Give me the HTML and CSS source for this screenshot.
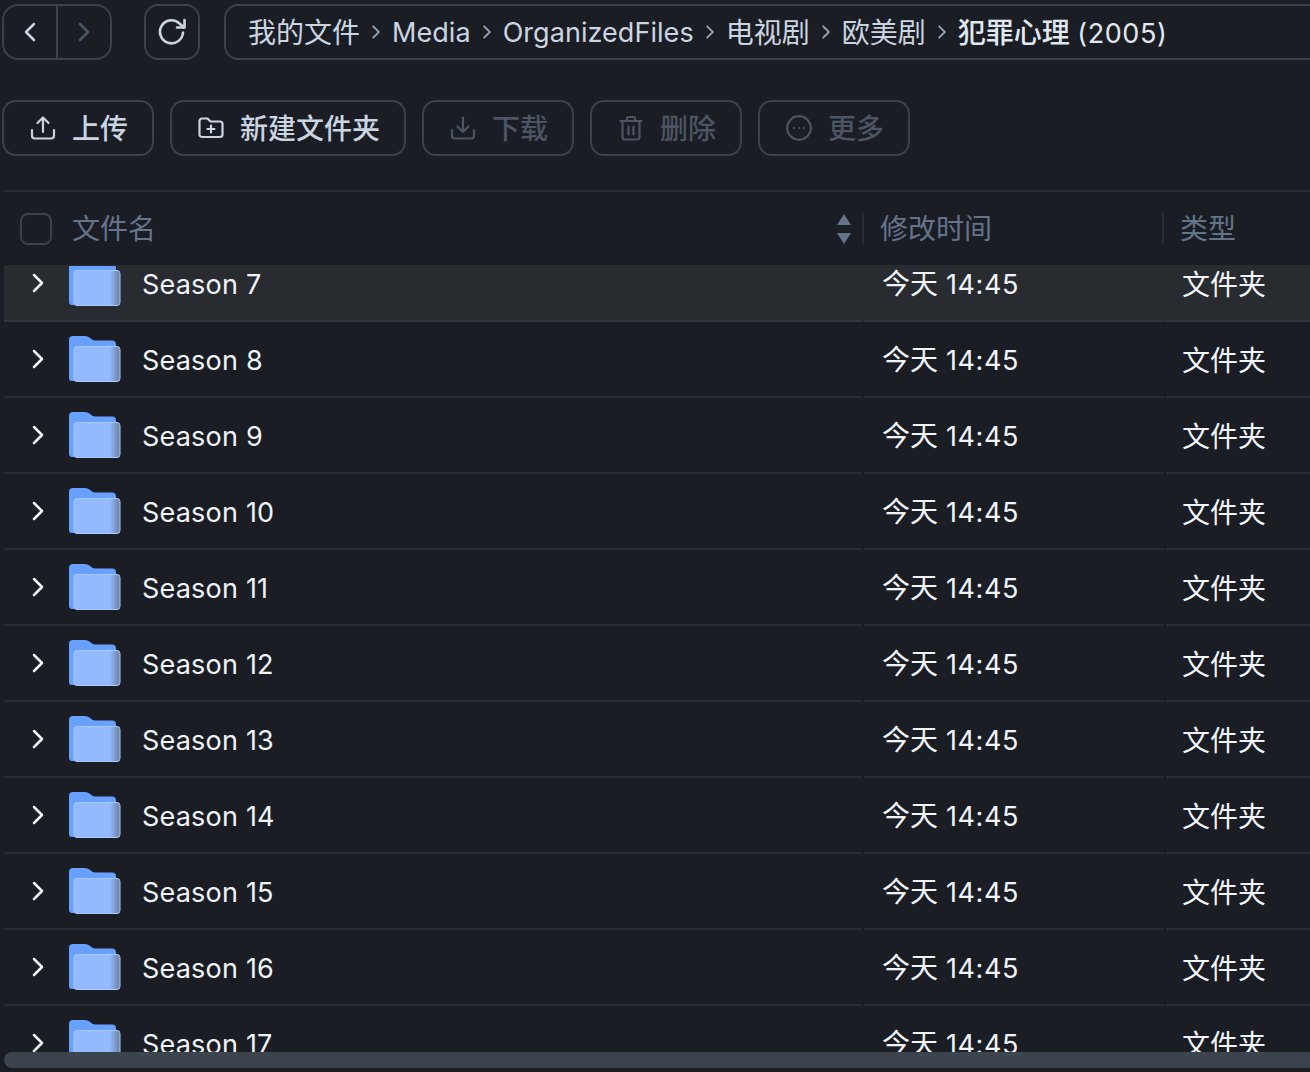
FILE: index.html
```html
<!DOCTYPE html>
<html lang="zh-CN">
<head>
    <meta charset="UTF-8">
    <title>我的文件</title>
    <link rel="stylesheet" href="styles.css">
</head>
<body>
    <svg class="defs" width="0" height="0">
        <defs>
            <linearGradient id="folderFront" x1="0" y1="0" x2="1" y2="0">
                <stop offset="0" stop-color="#93baff"/>
                <stop offset="0.78" stop-color="#93baff"/>
                <stop offset="1" stop-color="#6b7f9f"/>
            </linearGradient>
            <symbol id="folder" viewBox="0 0 52 46">
                <path d="M0 4a4 4 0 0 1 4-4h12q2.500 0 4.500 1.500l2.500 2q1.500 1 3.500 1H43a4 4 0 0 1 4 4V45H3a3 3 0 0 1-3-3z" fill="#68a1fd"/>
                <rect x="5" y="10.500" width="46" height="35" rx="3" fill="url(#folderFront)" stroke="#a9c8ff" stroke-width="1"/>
            </symbol>
            <symbol id="chevron" viewBox="0 0 14 22">
                <path d="M3 3l8 8-8 8" fill="none" stroke="currentColor" stroke-width="2.500" stroke-linecap="round" stroke-linejoin="round"/>
            </symbol>
        </defs>
    </svg>

    <!-- TOP BAR -->
    <div class="topbar">
        <div class="nav-group">
            <button class="nav-btn">
                <svg width="14" height="22"><use href="#chevron" transform="matrix(-1 0 0 1 14 0)"/></svg>
            </button>
            <button class="nav-btn nav-btn-off">
                <svg width="14" height="22"><use href="#chevron"/></svg>
            </button>
        </div>
        <button class="reload-btn">
            <svg width="30" height="30" viewBox="0 0 30 30" fill="none" stroke="currentColor" stroke-width="2.600" stroke-linecap="round" stroke-linejoin="round">
                <path d="M26 15.500A11.500 11.500 0 1 1 22.500 6.500L27 10.500"/>
                <path d="M27.500 3v7.500H20"/>
            </svg>
        </button>
        <div class="crumbs">
            <span>我的文件</span>
            <svg class="crumb-sep" width="10" height="16"><use href="#chevron"/></svg>
            <span class="latin">Media</span>
            <svg class="crumb-sep" width="10" height="16"><use href="#chevron"/></svg>
            <span class="latin">OrganizedFiles</span>
            <svg class="crumb-sep" width="10" height="16"><use href="#chevron"/></svg>
            <span>电视剧</span>
            <svg class="crumb-sep" width="10" height="16"><use href="#chevron"/></svg>
            <span>欧美剧</span>
            <svg class="crumb-sep" width="10" height="16"><use href="#chevron"/></svg>
            <span class="crumb-last">犯罪心理 <span class="latin">(2005)</span></span>
        </div>
    </div>

    <!-- TOOLBAR -->
    <div class="toolbar">
        <button class="tool-btn">
            <svg width="26" height="26" viewBox="0 0 26 26" fill="none" stroke="currentColor" stroke-width="2.200" stroke-linecap="round" stroke-linejoin="round">
                <path d="M2 15v5.500a3 3 0 0 0 3 3h16a3 3 0 0 0 3-3V15"/>
                <path d="M13 17V2.500M7.500 8L13 2.500 18.500 8"/>
            </svg>
            上传
        </button>
        <button class="tool-btn tool-btn-wide">
            <svg width="26" height="26" viewBox="0 0 26 26" fill="none" stroke="currentColor" stroke-width="2.200" stroke-linecap="round" stroke-linejoin="round">
                <path d="M1.500 6a2.500 2.500 0 0 1 2.500-2.500h5.500l3 3H22a2.500 2.500 0 0 1 2.500 2.500v10.500a2.500 2.500 0 0 1-2.500 2.500H4a2.500 2.500 0 0 1-2.500-2.500z"/>
                <path d="M13 10.500v7M9.500 14h7"/>
            </svg>
            新建文件夹
        </button>
        <button class="tool-btn tool-btn-off">
            <svg width="26" height="26" viewBox="0 0 26 26" fill="none" stroke="currentColor" stroke-width="2.200" stroke-linecap="round" stroke-linejoin="round">
                <path d="M2 15v5.500a3 3 0 0 0 3 3h16a3 3 0 0 0 3-3V15"/>
                <path d="M13 2.500V17M7.500 11.500L13 17l5.500-5.500"/>
            </svg>
            下载
        </button>
        <button class="tool-btn tool-btn-off">
            <svg width="26" height="26" viewBox="0 0 26 26" fill="none" stroke="currentColor" stroke-width="2.200" stroke-linecap="round" stroke-linejoin="round">
                <path d="M2.500 6h21M9 6V3.500a1.500 1.500 0 0 1 1.500-1.500h5A1.500 1.500 0 0 1 17 3.500V6"/>
                <path d="M4.500 6v16a2.500 2.500 0 0 0 2.500 2.500h12a2.500 2.500 0 0 0 2.500-2.500V6"/>
                <path d="M10.500 11.500v8M15.500 11.500v8"/>
            </svg>
            删除
        </button>
        <button class="tool-btn tool-btn-off">
            <svg width="26" height="26" viewBox="0 0 26 26" fill="none" stroke="currentColor" stroke-width="2.200" stroke-linecap="round">
                <circle cx="13" cy="13" r="11.800"/>
                <path d="M8 13h.2M13 13h.2M18 13h.2" stroke-width="1.800"/>
            </svg>
            更多
        </button>
    </div>

    <!-- FILE TABLE -->
    <div class="table">
        <div class="table-head">
            <div class="head-name">
                <span class="checkbox"></span>
                <span class="head-label">文件名</span>
                <svg class="sort-icon" width="16" height="32" viewBox="0 0 16 32" fill="#64748b">
                    <path d="M8 1l7 11H1zM8 31L1 20h14z"/>
                </svg>
            </div>
            <div class="head-time"><span class="head-label">修改时间</span></div>
            <div class="head-type"><span class="head-label">类型</span></div>
        </div>

        <div class="table-body">
            <div class="rows">
                <div class="row row-hover">
                    <div class="cell-name"><svg class="row-arrow" width="14" height="22"><use href="#chevron"/></svg><svg class="folder" width="52" height="46"><use href="#folder"/></svg><span class="latin row-title">Season 7</span></div>
                    <div class="cell-time"><span>今天 <span class="latin">14:45</span></span></div>
                    <div class="cell-type">文件夹</div>
                </div>
                <div class="row">
                    <div class="cell-name"><svg class="row-arrow" width="14" height="22"><use href="#chevron"/></svg><svg class="folder" width="52" height="46"><use href="#folder"/></svg><span class="latin row-title">Season 8</span></div>
                    <div class="cell-time"><span>今天 <span class="latin">14:45</span></span></div>
                    <div class="cell-type">文件夹</div>
                </div>
                <div class="row">
                    <div class="cell-name"><svg class="row-arrow" width="14" height="22"><use href="#chevron"/></svg><svg class="folder" width="52" height="46"><use href="#folder"/></svg><span class="latin row-title">Season 9</span></div>
                    <div class="cell-time"><span>今天 <span class="latin">14:45</span></span></div>
                    <div class="cell-type">文件夹</div>
                </div>
                <div class="row">
                    <div class="cell-name"><svg class="row-arrow" width="14" height="22"><use href="#chevron"/></svg><svg class="folder" width="52" height="46"><use href="#folder"/></svg><span class="latin row-title">Season 10</span></div>
                    <div class="cell-time"><span>今天 <span class="latin">14:45</span></span></div>
                    <div class="cell-type">文件夹</div>
                </div>
                <div class="row">
                    <div class="cell-name"><svg class="row-arrow" width="14" height="22"><use href="#chevron"/></svg><svg class="folder" width="52" height="46"><use href="#folder"/></svg><span class="latin row-title">Season 11</span></div>
                    <div class="cell-time"><span>今天 <span class="latin">14:45</span></span></div>
                    <div class="cell-type">文件夹</div>
                </div>
                <div class="row">
                    <div class="cell-name"><svg class="row-arrow" width="14" height="22"><use href="#chevron"/></svg><svg class="folder" width="52" height="46"><use href="#folder"/></svg><span class="latin row-title">Season 12</span></div>
                    <div class="cell-time"><span>今天 <span class="latin">14:45</span></span></div>
                    <div class="cell-type">文件夹</div>
                </div>
                <div class="row">
                    <div class="cell-name"><svg class="row-arrow" width="14" height="22"><use href="#chevron"/></svg><svg class="folder" width="52" height="46"><use href="#folder"/></svg><span class="latin row-title">Season 13</span></div>
                    <div class="cell-time"><span>今天 <span class="latin">14:45</span></span></div>
                    <div class="cell-type">文件夹</div>
                </div>
                <div class="row">
                    <div class="cell-name"><svg class="row-arrow" width="14" height="22"><use href="#chevron"/></svg><svg class="folder" width="52" height="46"><use href="#folder"/></svg><span class="latin row-title">Season 14</span></div>
                    <div class="cell-time"><span>今天 <span class="latin">14:45</span></span></div>
                    <div class="cell-type">文件夹</div>
                </div>
                <div class="row">
                    <div class="cell-name"><svg class="row-arrow" width="14" height="22"><use href="#chevron"/></svg><svg class="folder" width="52" height="46"><use href="#folder"/></svg><span class="latin row-title">Season 15</span></div>
                    <div class="cell-time"><span>今天 <span class="latin">14:45</span></span></div>
                    <div class="cell-type">文件夹</div>
                </div>
                <div class="row">
                    <div class="cell-name"><svg class="row-arrow" width="14" height="22"><use href="#chevron"/></svg><svg class="folder" width="52" height="46"><use href="#folder"/></svg><span class="latin row-title">Season 16</span></div>
                    <div class="cell-time"><span>今天 <span class="latin">14:45</span></span></div>
                    <div class="cell-type">文件夹</div>
                </div>
                <div class="row">
                    <div class="cell-name"><svg class="row-arrow" width="14" height="22"><use href="#chevron"/></svg><svg class="folder" width="52" height="46"><use href="#folder"/></svg><span class="latin row-title">Season 17</span></div>
                    <div class="cell-time"><span>今天 <span class="latin">14:45</span></span></div>
                    <div class="cell-type">文件夹</div>
                </div>
            </div>
        </div>

        <div class="scrollbar"></div>
    </div>
</body>
</html>
```

FILE: styles.css
```css
:root {
    --bg-color: #1a1d24;
    --border-color: #3a4149;
    --line-color: #272b32;
    --text-color: #cbd5e1;
    --muted-color: #64748b;
    --off-color: #4b5563;
    --name-width: 858px;
}

html, body {
    height: 100%;
}

body {
    margin: 0;
    overflow: hidden;
    background: var(--bg-color);
    color: var(--text-color);
    font-family: Inter, "Noto Sans CJK SC", sans-serif;
    font-size: 28px;
    line-height: 32px;
}

button {
    font-family: inherit;
    line-height: inherit;
    background: none;
    color: inherit;
    cursor: pointer;
}

.defs {
    position: absolute;
}

/* Latin text runs a bit smaller next to the CJK glyphs */
.latin {
    font-size: 27px;
    letter-spacing: 0.2px;
}

/* TOP BAR */
.topbar {
    display: flex;
    gap: 24px;
    height: 56px;
    margin: 4px 0 40px 2px;
}

.nav-group {
    display: flex;
    flex: none;
    width: 110px;
    box-sizing: border-box;
    border: 2px solid var(--border-color);
    border-radius: 16px;
    margin-right: 8px;
}

.nav-btn {
    flex: 1;
    display: flex;
    align-items: center;
    justify-content: center;
    padding: 0;
    border: none;
}

.nav-btn-off {
    color: var(--off-color);
    border-left: 2px solid var(--border-color);
}

.reload-btn {
    flex: none;
    display: flex;
    align-items: center;
    justify-content: center;
    width: 56px;
    padding: 0;
    border: 2px solid var(--border-color);
    border-radius: 14px;
}

.crumbs {
    flex: none;
    display: flex;
    align-items: center;
    gap: 11px;
    width: 1200px;
    box-sizing: border-box;
    padding: 2px 0 0 22px;
    border: 2px solid var(--border-color);
    border-radius: 14px;
    white-space: nowrap;
}

.crumbs .latin {
    letter-spacing: 0.05px;
}

.crumb-sep {
    color: #94a3b8;
    margin-bottom: 2px;
}

.crumb-last {
    color: #e2e8f0;
    font-weight: 500;
}

.crumbs .crumb-last .latin {
    font-weight: 400;
    letter-spacing: 0.6px;
}

/* TOOLBAR */
.toolbar {
    display: flex;
    gap: 16px;
    margin-left: 2px;
}

.tool-btn {
    display: flex;
    align-items: center;
    justify-content: center;
    gap: 16px;
    width: 152px;
    height: 56px;
    padding: 2px 0 0 2px;
    border: 2px solid var(--border-color);
    border-radius: 14px;
    font-size: 28px;
    font-weight: 500;
}

.tool-btn svg {
    margin-bottom: 2px;
}

.tool-btn-wide {
    width: 236px;
}

.tool-btn-off {
    color: var(--off-color);
}

/* FILE TABLE */
.table {
    margin: 34px 0 0 4px;
    border-top: 2px solid var(--line-color);
}

.table-head {
    display: flex;
    height: 74px;
    box-sizing: border-box;
    align-items: center;
    border-bottom: 1px solid var(--line-color);
}

.head-label {
    color: var(--muted-color);
}

.head-name {
    display: flex;
    align-items: center;
    flex: none;
    width: var(--name-width);
    box-sizing: border-box;
    padding-left: 16px;
}

.checkbox {
    width: 28px;
    height: 28px;
    border: 2px solid var(--border-color);
    border-radius: 8px;
    margin-right: 20px;
}

.sort-icon {
    margin-left: auto;
    margin-right: 10px;
}

.head-time,
.head-type {
    flex: none;
    height: 32px;
    border-left: 2px solid var(--line-color);
}

.head-time {
    width: 300px;
    padding-left: 16px;
    box-sizing: border-box;
}

.head-type {
    padding-left: 16px;
}

.table-body {
    height: 786px;
    overflow: hidden;
}

.rows {
    margin-top: -20px;
}

.row {
    display: flex;
    height: 76px;
    color: #f1f5f9;
}

.row-hover {
    background: #282b30;
}

.row-hover > div {
    border-bottom-color: #32363c;
}

.cell-name,
.cell-time,
.cell-type {
    display: flex;
    align-items: center;
    box-sizing: border-box;
    border-bottom: 2px solid var(--line-color);
}

.cell-name {
    flex: none;
    width: var(--name-width);
    margin-right: 2px;
    padding-left: 27px;
}

.row-title {
    margin-top: 4px;
}

.cell-time {
    flex: none;
    width: 300px;
    margin-right: 2px;
    padding: 2px 0 0 18px;
}

.cell-time .latin {
    letter-spacing: 0.6px;
}

.cell-type {
    flex: 1;
    padding: 4px 0 0 16px;
}

.row-arrow {
    margin-right: 24px;
}

.folder {
    margin-right: 21px;
}

.scrollbar {
    height: 16px;
    background: #3c454d;
    border-radius: 8px 0 0 8px;
}
```
